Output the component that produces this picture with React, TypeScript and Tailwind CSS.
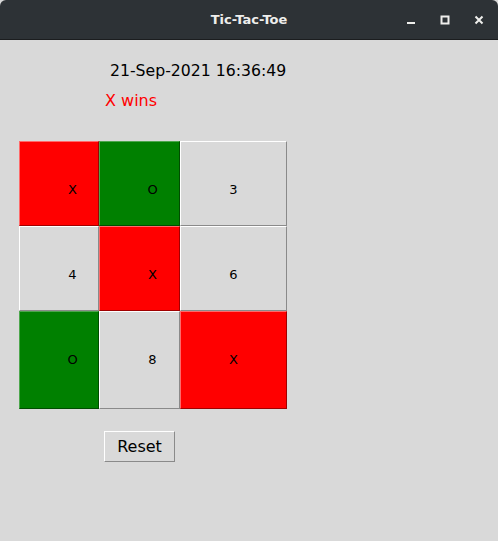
import React from 'react';

type Cell = { label: string; color: 'red' | 'green' | 'none' };

const board: Cell[] = [
  { label: 'X', color: 'red' },
  { label: 'O', color: 'green' },
  { label: '3', color: 'none' },
  { label: '4', color: 'none' },
  { label: 'X', color: 'red' },
  { label: '6', color: 'none' },
  { label: 'O', color: 'green' },
  { label: '8', color: 'none' },
  { label: 'X', color: 'red' },
];

const colWidths = ['w-[80px]', 'w-[81px]', 'w-[107px]'];
const rowHeights = ['h-[85px]', 'h-[85px]', 'h-[98px]'];

const cellStyle = {
  red: 'bg-[#ff0000] border-t-[#ff6a6a] border-l-[#ff6a6a] border-b-[#a00000] border-r-[#a00000]',
  green: 'bg-[#008000] border-t-[#4da64d] border-l-[#4da64d] border-b-[#004d00] border-r-[#004d00]',
  none: 'bg-[#d9d9d9] border-t-white border-l-white border-b-[#8a8a8a] border-r-[#8a8a8a]',
};

const Square: React.FC<{ cell: Cell; w: string; h: string }> = ({ cell, w, h }) => (
  <div className={`${w} ${h} relative overflow-hidden border ${cellStyle[cell.color]}`}>
    <div className="absolute left-0 top-0 w-[105px] h-[96px] flex items-center justify-center text-[13px] text-black">
      {cell.label}
    </div>
  </div>
);

const App: React.FC = () => {
  return (
    <div className="w-[498px] h-[541px] bg-[#d9d9d9] flex flex-col font-['DejaVu_Sans',sans-serif]">
      <div className="h-[40px] bg-[#2d3236] rounded-t-[6px] border-b border-[#1b1d1f] relative flex items-center justify-center shrink-0">
        <span className="text-[13px] font-bold text-[#eeeeec]">Tic-Tac-Toe</span>
        <div className="absolute right-0 top-0 h-full flex items-center gap-[24px] pr-[14px] text-[#eeeeec]">
          <svg width="10" height="10" viewBox="0 0 10 10"><rect x="1" y="7" width="8" height="2" fill="#eeeeec" /></svg>
          <svg width="10" height="10" viewBox="0 0 10 10"><rect x="1.5" y="1.5" width="7" height="7" fill="none" stroke="#eeeeec" strokeWidth="2" /></svg>
          <svg width="10" height="10" viewBox="0 0 10 10"><path d="M1.5 1.5 L8.5 8.5 M8.5 1.5 L1.5 8.5" stroke="#eeeeec" strokeWidth="2" /></svg>
        </div>
      </div>

      <div className="pl-[110px] pt-[21px] text-[15.7px] leading-[20px] text-black">21-Sep-2021 16:36:49</div>
      <div className="pl-[105px] pt-[10px] text-[16px] leading-[20px] text-[#ff0000]">X wins</div>

      <div className="ml-[19px] mt-[30px] flex flex-col">
        {rowHeights.map((h, r) => (
          <div key={r} className="flex">
            {colWidths.map((w, c) => (
              <Square key={c} cell={board[r * 3 + c]} w={w} h={h} />
            ))}
          </div>
        ))}
      </div>

      <div className="pl-[104px] pt-[22px]">
        <button className="w-[71px] h-[31px] bg-[#d9d9d9] border border-t-white border-l-white border-b-[#8a8a8a] border-r-[#8a8a8a] text-[16px] text-black">
          Reset
        </button>
      </div>
    </div>
  );
};

export default App;
